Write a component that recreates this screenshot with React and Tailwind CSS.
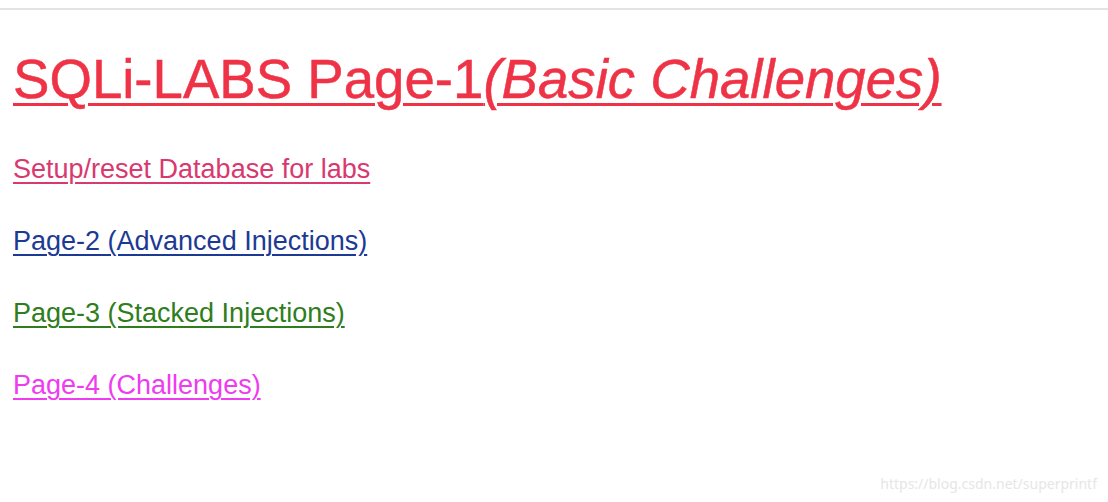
import React from "react";

const links = [
  { text: "Setup/reset Database for labs", color: "text-[#d8396f]" },
  { text: "Page-2 (Advanced Injections)", color: "text-[#1c3a94]" },
  { text: "Page-3 (Stacked Injections)", color: "text-[#2f7d1d]" },
  { text: "Page-4 (Challenges)", color: "text-[#ee3cf0]" },
];

const App = () => {
  return (
    <div className="relative h-[502px] w-[1108px] bg-white overflow-hidden font-['Liberation_Sans',Arial,sans-serif]">
      <div className="h-[8px]" />
      <div className="h-[2px] bg-[#e3e3e6]" />
      <div className="px-[13px] pt-[40px]">
        <h1 className="text-[54.6px] leading-[60px] text-[#ef3347] underline underline-offset-[5px] decoration-[3px] [-webkit-text-stroke:0.5px_#ef3347]">
          SQLi-LABS Page-1<i>(Basic Challenges)</i>
        </h1>
        <div className="mt-[46px] flex flex-col gap-[45px]">
          {links.map((l) => (
            <a key={l.text} href="#" className={`text-[27px] leading-[27px] underline underline-offset-[4px] decoration-[2px] ${l.color}`}>
              {l.text}
            </a>
          ))}
        </div>
      </div>
      <div className="absolute right-[11px] bottom-[8px] text-[14px] text-[#e6e6e6] font-['Noto_Sans',sans-serif]">
        https://blog.csdn.net/superprintf
      </div>
    </div>
  );
};

export default App;
